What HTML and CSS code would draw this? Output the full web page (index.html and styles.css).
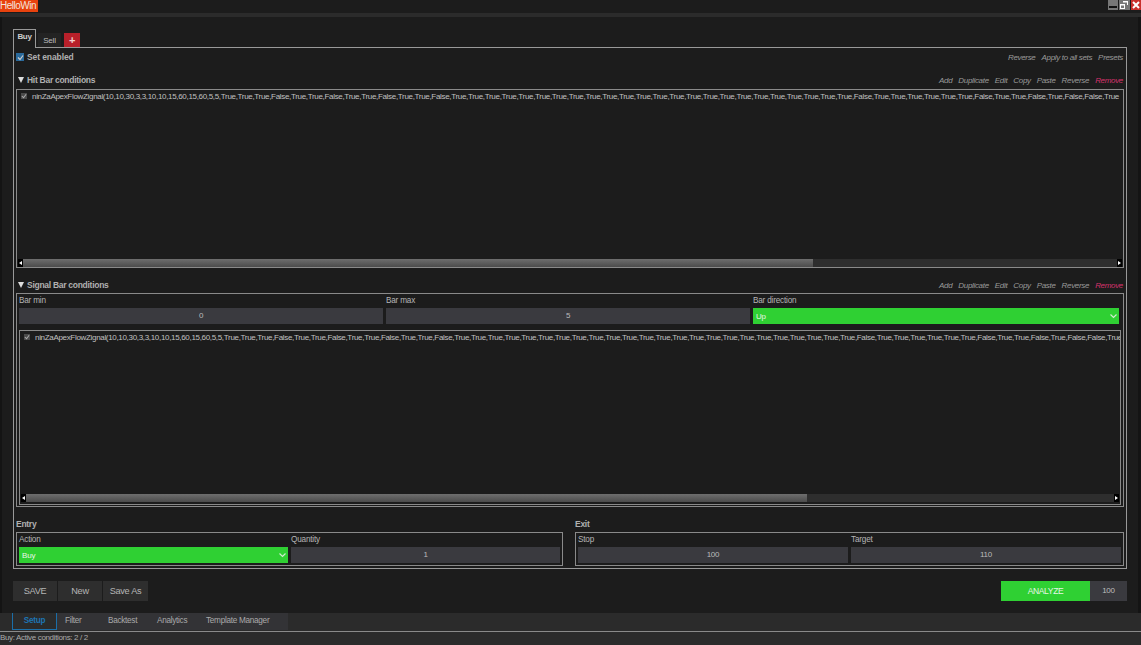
FILE: index.html
```html
<!DOCTYPE html>
<html lang="en">
<head>
  <meta charset="UTF-8">
  <title>HelloWin</title>
  <link rel="stylesheet" href="styles.css">
</head>
<body>
  <div class="titlebar">
    <div class="app-name">HelloWin</div>
    <div class="win-btns">
      <div class="win-btn"><svg width="10" height="10" viewBox="0 0 10 10"><rect x="1" y="6" width="8" height="2" fill="#111"/></svg></div>
      <div class="win-btn"><svg width="10" height="10" viewBox="0 0 10 10"><path d="M4 1h5v4H8V2.500H4zM1 4h5v5H1z M2 5.500v2.500h3V5.500z" fill="#fff" fill-rule="evenodd"/></svg></div>
      <div class="win-btn close"><svg width="10" height="10" viewBox="0 0 10 10"><path d="M2 2l6 6M8 2l-6 6" stroke="#fff" stroke-width="2"/></svg></div>
    </div>
  </div>
  <div class="title-strip"></div>

  <div class="main">
    <div class="set-tabs">
      <div class="set-tab active">Buy</div>
      <div class="set-tab">Sell</div>
      <div class="set-tab add">+</div>
    </div>

    <div class="panel">
      <div class="row-head enabled-row">
        <label class="title enabled"><span class="check blue"><svg width="7" height="7" viewBox="0 0 7 7"><path d="M1 3.500l2 2 3-4" fill="none" stroke="#ccc" stroke-width="1.200"/></svg></span>Set enabled</label>
        <div class="links">
          <span>Reverse</span><span>Apply to all sets</span><span>Presets</span>
        </div>
      </div>

      <div class="row-head section-head">
        <div class="title"><span class="caret"></span>Hit Bar conditions</div>
        <div class="links">
          <span>Add</span><span>Duplicate</span><span>Edit</span><span>Copy</span><span>Paste</span><span>Reverse</span><span class="remove">Remove</span>
        </div>
      </div>
      <div class="list hit-list">
        <div class="list-row">
          <span class="check"><svg width="6" height="6" viewBox="0 0 7 7"><path d="M1 3.500l2 2 3-4" fill="none" stroke="#aaa" stroke-width="1.200"/></svg></span>
          <span class="cond">ninZaApexFlowZignal(10,10,30,3,3,10,10,15,60,15,60,5,5,True,True,True,False,True,True,False,True,True,False,True,True,False,True,True,True,True,True,True,True,True,True,True,True,True,True,True,True,True,True,True,True,True,True,True,True,True,False,True,True,True,True,True,True,False,True,True,False,True,False,False,True</span>
        </div>
        <div class="scrollbar">
          <span class="arrow"><i class="tri left"></i></span>
          <div class="track"><div class="thumb" style="width: 790px"></div></div>
          <span class="arrow"><i class="tri right"></i></span>
        </div>
      </div>

      <div class="row-head section-head signal-head">
        <div class="title"><span class="caret"></span>Signal Bar conditions</div>
        <div class="links">
          <span>Add</span><span>Duplicate</span><span>Edit</span><span>Copy</span><span>Paste</span><span>Reverse</span><span class="remove">Remove</span>
        </div>
      </div>
      <div class="signal-box">
        <div class="fields three">
          <div class="field"><div class="field-label">Bar min</div><div class="num">0</div></div>
          <div class="field"><div class="field-label">Bar max</div><div class="num">5</div></div>
          <div class="field"><div class="field-label">Bar direction</div><div class="combo">Up<svg width="7" height="5" viewBox="0 0 7 5"><path d="M.5 .5l3 3 3-3" fill="none" stroke="#cfeccf" stroke-width="1.200"/></svg></div></div>
        </div>
        <div class="list signal-list">
          <div class="list-row">
            <span class="check"><svg width="6" height="6" viewBox="0 0 7 7"><path d="M1 3.500l2 2 3-4" fill="none" stroke="#aaa" stroke-width="1.200"/></svg></span>
            <span class="cond">ninZaApexFlowZignal(10,10,30,3,3,10,10,15,60,15,60,5,5,True,True,True,False,True,True,False,True,True,False,True,True,False,True,True,True,True,True,True,True,True,True,True,True,True,True,True,True,True,True,True,True,True,True,True,True,True,False,True,True,True,True,True,True,False,True,True,False,True,False,False,True</span>
          </div>
          <div class="scrollbar">
            <span class="arrow"><i class="tri left"></i></span>
            <div class="track"><div class="thumb" style="width: 781px"></div></div>
            <span class="arrow"><i class="tri right"></i></span>
          </div>
        </div>
      </div>

      <div class="bottom-groups">
        <div class="group entry">
          <div class="group-title">Entry</div>
          <div class="group-box fields two">
            <div class="field"><div class="field-label">Action</div><div class="combo">Buy<svg width="7" height="5" viewBox="0 0 7 5"><path d="M.5 .5l3 3 3-3" fill="none" stroke="#cfeccf" stroke-width="1.200"/></svg></div></div>
            <div class="field"><div class="field-label">Quantity</div><div class="num">1</div></div>
          </div>
        </div>
        <div class="group exit">
          <div class="group-title">Exit</div>
          <div class="group-box fields two">
            <div class="field"><div class="field-label">Stop</div><div class="num">100</div></div>
            <div class="field"><div class="field-label">Target</div><div class="num">110</div></div>
          </div>
        </div>
      </div>
    </div>

    <div class="actions">
      <div class="btn-group">
        <div class="btn save">SAVE</div>
        <div class="btn new">New</div>
        <div class="btn save-as">Save As</div>
      </div>
      <div class="analyze-group">
        <div class="analyze">ANALYZE</div>
        <div class="count">100</div>
      </div>
    </div>
  </div>

  <div class="bottom-tabs">
    <div class="bottom-tab active">Setup</div>
    <div class="bottom-tab filter">Filter</div>
    <div class="bottom-tab backtest">Backtest</div>
    <div class="bottom-tab analytics">Analytics</div>
    <div class="bottom-tab template">Template Manager</div>
  </div>
  <div class="status">Buy: Active conditions: 2 / 2</div>
</body>
</html>
```

FILE: styles.css
```css
* {
  box-sizing: border-box;
}
html, body {
  margin: 0;
  height: 645px;
  overflow: hidden;
}
body {
  display: flex;
  flex-direction: column;
  background-color: #141414;
  color: #bdbdbd;
  font-family: "Liberation Sans", Arial, sans-serif;
  font-size: 8px;
  letter-spacing: -0.200px;
}
.titlebar {
  display: flex;
  justify-content: space-between;
  height: 13px;
  background-color: #1c1c1c;
}
.app-name {
  width: 38px;
  height: 12px;
  background-color: #e8420e;
  color: #f4e4dc;
  font-size: 10px;
  letter-spacing: -0.500px;
  line-height: 12px;
  white-space: nowrap;
}
.win-btns {
  display: flex;
  gap: 1px;
}
.win-btn {
  display: flex;
  align-items: center;
  justify-content: center;
  width: 10.500px;
  height: 10px;
  background-color: #777;
}
.win-btn.close {
  background-color: #c9302c;
}
.title-strip {
  height: 4px;
  background-color: #2b2b2b;
}
.main {
  flex: 1;
  margin: 0 3px 0 2px;
  padding: 12px 11px 0 11px;
  background-color: #1c1c1c;
}

/* set tabs */
.set-tabs {
  display: flex;
  align-items: flex-end;
  height: 18px;
  gap: 2px;
}
.set-tab {
  width: 23px;
  height: 14px;
  background-color: #232323;
  font-size: 8px;
  line-height: 15px;
  text-align: center;
}
.set-tab.active {
  height: 19px;
  line-height: 13px;
  border: 1px solid #999;
  border-bottom: none;
  background-color: #1c1c1c;
  color: #ccc;
  font-weight: bold;
  letter-spacing: -0.300px;
  position: relative;
  top: 1px;
  z-index: 1;
}
.set-tab.add {
  width: 16px;
  margin-left: 1px;
  background-color: #b8202a;
  color: #f2d0d0;
  font-size: 11px;
  font-weight: bold;
}
.panel {
  height: 522px;
  border: 1px solid #999;
  padding: 0 2px;
}

/* headers */
.row-head {
  display: flex;
  justify-content: space-between;
  align-items: center;
}
.enabled-row {
  height: 18px;
}
.section-head {
  height: 18px;
  margin-top: 5px;
  padding-left: 2px;
}
.signal-head {
  margin-top: 7px;
  padding-top: 2px;
}
.title {
  display: flex;
  align-items: center;
  font-size: 8.500px;
  font-weight: bold;
  letter-spacing: -0.280px;
  color: #b0b0b0;
}
.title.enabled {
  letter-spacing: -0.100px;
}
.caret {
  width: 0;
  height: 0;
  margin-right: 3px;
  border-left: 3.500px solid transparent;
  border-right: 3.500px solid transparent;
  border-top: 6px solid #ddd;
}
.links {
  display: flex;
  gap: 6px;
  padding-right: 1px;
  font-size: 8px;
  font-style: italic;
  letter-spacing: -0.320px;
  color: #9a9a9a;
}
.remove {
  color: #d6336c;
}

/* lists */
.check {
  display: inline-flex;
  align-items: center;
  justify-content: center;
  width: 6px;
  height: 6px;
  background-color: #4a4a4a;
}
.check.blue {
  width: 8px;
  height: 8px;
  margin-right: 3px;
  background-color: #2a6a9c;
}
.list {
  display: flex;
  flex-direction: column;
  border: 1px solid #8a8a8a;
}
.hit-list {
  height: 179px;
}
.list-row {
  flex: 1;
  display: flex;
  align-items: flex-start;
  padding: 3px 0 0 4px;
  overflow: hidden;
  white-space: nowrap;
}
.list-row .check {
  flex: none;
  margin-top: 0;
  margin-right: 5px;
}
.cond {
  font-size: 8px;
  letter-spacing: -0.320px;
  line-height: 8px;
  color: #c0c0c0;
}
.scrollbar {
  display: flex;
  flex: none;
  height: 8px;
  margin: 0 1px 0;
  background-color: #2e2e2e;
}
.arrow {
  display: flex;
  align-items: center;
  justify-content: center;
  width: 5px;
  background-color: #000;
}
.tri {
  width: 0;
  height: 0;
  border-top: 2px solid transparent;
  border-bottom: 2px solid transparent;
}
.tri.left {
  border-right: 3px solid #fff;
}
.tri.right {
  border-left: 3px solid #fff;
}
.track {
  flex: 1;
}
.thumb {
  height: 100%;
  background: linear-gradient(#6e6e6e, #4c4c4c);
}

/* signal box */
.signal-box {
  height: 214px;
  border: 1px solid #8a8a8a;
  padding: 1px 2px 0;
}
.fields {
  display: grid;
  gap: 3px;
}
.fields.three {
  grid-template-columns: 364px 364px 366px;
}
.fields.two {
  grid-template-columns: 1fr 1fr;
}
.field-label {
  height: 13px;
  font-size: 8.200px;
  line-height: 12px;
  color: #b5b5b5;
}
.num {
  height: 16px;
  background-color: #3a3a3f;
  font-size: 8px;
  line-height: 16px;
  text-align: center;
  color: #bbb;
}
.combo {
  display: flex;
  align-items: center;
  justify-content: space-between;
  height: 16px;
  padding: 0 2px 0 3px;
  background-color: #2fd033;
  font-size: 8px;
  color: #e6f5e6;
}
.signal-list {
  height: 175px;
  margin-top: 6px;
}
.signal-list .scrollbar {
  margin-bottom: 2px;
}

/* entry and exit */
.bottom-groups {
  display: flex;
  gap: 12px;
  margin-top: 8px;
}
.group {
  flex: 1;
}
.group-title {
  height: 17px;
  font-size: 8.500px;
  font-weight: bold;
  letter-spacing: -0.280px;
  line-height: 18px;
  color: #b0b0b0;
}
.group-box {
  height: 34px;
  border: 1px solid #8a8a8a;
  padding: 1px 2px 0;
}
.entry {
  flex: none;
  width: 547px;
}

/* actions */
.actions {
  display: flex;
  justify-content: space-between;
  margin-top: 12px;
}
.btn-group,
.analyze-group {
  display: flex;
  height: 20px;
  line-height: 20px;
  text-align: center;
}
.btn {
  background-color: #2e2e2e;
  font-size: 9.200px;
  letter-spacing: -0.300px;
  color: #b5b5b5;
}
.btn.save {
  width: 44px;
}
.btn.new {
  width: 44px;
  margin-left: 1px;
}
.btn.save-as {
  width: 45px;
  margin-left: 1px;
}
.analyze {
  width: 89px;
  background-color: #2fd033;
  color: #e6f5e6;
  font-size: 8.500px;
  letter-spacing: -0.350px;
}
.count {
  width: 37px;
  background-color: #3a3a3f;
  font-size: 8px;
}

/* bottom tabs */
.bottom-tabs {
  display: flex;
  flex: none;
  height: 18px;
  padding-left: 12px;
  background-color: #2b2b2b;
  border-bottom: 1px solid #2b2b2b;
}
.bottom-tab {
  height: 17px;
  background-color: #333336;
  font-size: 8.200px;
  letter-spacing: -0.280px;
  line-height: 15px;
  color: #aaa;
}
.bottom-tab.active {
  width: 45px;
  border: 1px solid #1b6ea8;
  border-top: none;
  background-color: #2b2b2b;
  color: #1d75b5;
  font-weight: bold;
  text-align: center;
}
.bottom-tab.filter {
  width: 44px;
  padding-left: 8px;
}
.bottom-tab.backtest {
  width: 48px;
  padding-left: 7px;
}
.bottom-tab.analytics {
  width: 49px;
  padding-left: 8px;
}
.bottom-tab.template {
  width: 90px;
  padding-left: 8px;
}
.status {
  flex: none;
  height: 14px;
  border-top: 1px solid #8a8a8a;
  background-color: #2b2b2b;
  font-size: 8px;
  letter-spacing: -0.340px;
  line-height: 12px;
  color: #aaa;
}
```
